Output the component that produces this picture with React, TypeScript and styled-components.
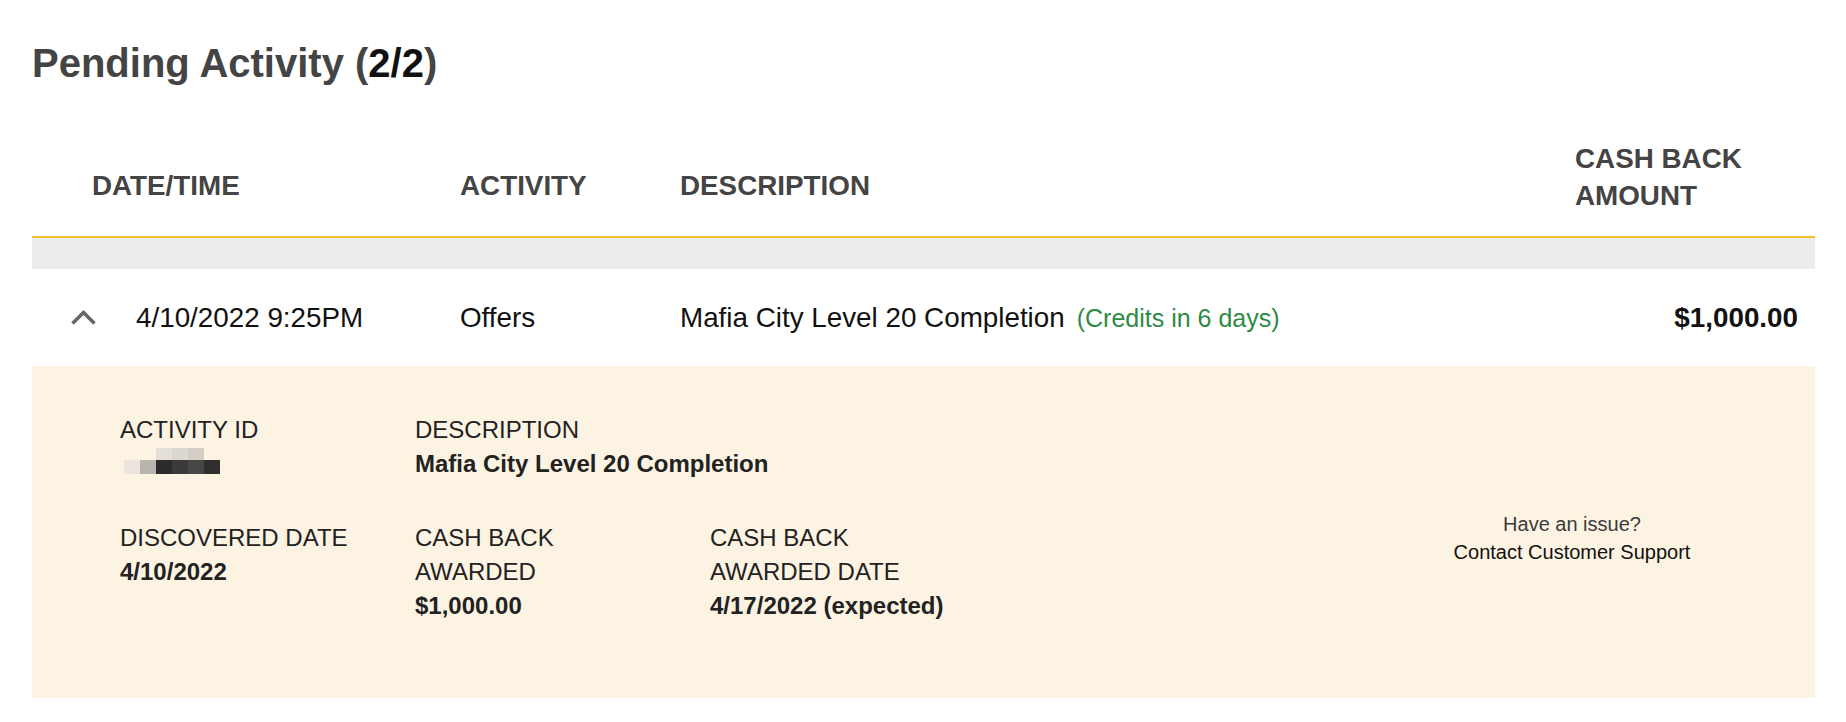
import React from "react";
import styled, { createGlobalStyle } from "styled-components";

const GlobalStyle = createGlobalStyle`
  html, body {
    margin: 0;
    padding: 0;
    background: #ffffff;
  }
  body {
    font-family: "Liberation Sans", Arial, Helvetica, sans-serif;
    -webkit-font-smoothing: antialiased;
  }
`;

const COLS = "428px 220px 1fr 240px";

const Page = styled.main`
  padding: 40px 31px 24px 32px;
`;

const Title = styled.h1`
  margin: 0;
  font-size: 40px;
  line-height: 46px;
  font-weight: 700;
  color: #444444;
`;

const Count = styled.span`
  color: #111111;
`;

const HeaderRow = styled.div`
  display: grid;
  grid-template-columns: ${COLS};
  align-items: end;
  padding: 54px 0 22px;
  border-bottom: 2px solid #f2c12e;
`;

const HeaderCell = styled.div<{ $indent?: number; $stacked?: boolean }>`
  font-size: 27.8px;
  line-height: 37px;
  font-weight: 700;
  color: #444444;
  text-transform: uppercase;
  padding-left: ${(p) => p.$indent ?? 0}px;
  padding-bottom: ${(p) => (p.$stacked ? 0 : 10)}px;
`;

const Band = styled.div`
  height: 31px;
  background: #ececec;
`;

const Row = styled.div`
  display: grid;
  grid-template-columns: ${COLS};
  align-items: center;
  height: 97px;
  font-size: 27.8px;
  color: #111111;
`;

const DateCell = styled.div`
  display: flex;
  align-items: center;
  gap: 39px;
  padding-left: 38px;
`;

const Toggle = styled.button`
  display: flex;
  align-items: center;
  justify-content: center;
  width: 27px;
  height: 17px;
  padding: 0;
  margin: 0;
  border: 0;
  background: none;
  cursor: pointer;
`;

const Cell = styled.div``;

const Credits = styled.span`
  margin-left: 12px;
  font-size: 25px;
  color: #2e8b46;
`;

const Amount = styled.div`
  text-align: right;
  padding-right: 17px;
  font-weight: 700;
`;

const Detail = styled.section`
  display: grid;
  grid-template-columns: 250px 250px 250px 1fr;
  column-gap: 45px;
  row-gap: 40.5px;
  padding: 47px 33px 76px 88px;
  background: #fdf3e3;
  font-size: 24px;
  line-height: 33.75px;
  color: #222222;
`;

const Field = styled.div<{ $span?: number }>`
  grid-column: span ${(p) => p.$span ?? 1};
`;

const Label = styled.div`
  text-transform: uppercase;
`;

const Value = styled.div`
  font-weight: 700;
`;

const Redacted = styled.div`
  display: grid;
  grid-template-columns: repeat(6, 16px);
  grid-template-rows: 12px 14px;
  width: max-content;
  margin: 1px 0 0 4px;
  filter: blur(0.6px);
`;

const Pixel = styled.span<{ $c: string }>`
  background: ${(p) => p.$c};
`;

const Support = styled.div`
  grid-column: 4;
  justify-self: end;
  width: 420px;
  margin-top: -10px;
  text-align: center;
  font-size: 20px;
  line-height: 27.5px;
`;

const Ask = styled.div`
  color: #3a3a3a;
`;

const SupportLink = styled.a`
  color: #111111;
  text-decoration: none;
`;

const pixels = [
  "transparent", "transparent", "#e4dfd7", "#dcd7cf", "#d3cec6", "transparent",
  "#ebe5dc", "#b9b4ad", "#2b2b2b", "#3b3a39", "#474645", "#2f2f2f",
];

const Chevron = () => (
  <svg width="27" height="17" viewBox="0 0 27 17" aria-hidden="true">
    <polyline
      points="2.5,14.5 13.5,3.5 24.5,14.5"
      fill="none"
      stroke="#666666"
      strokeWidth="3.5"
      strokeLinejoin="miter"
    />
  </svg>
);

export default function App() {
  return (
    <>
      <GlobalStyle />
      <Page>
        <Title>
          Pending Activity (<Count>2/2</Count>)
        </Title>

        <HeaderRow>
          <HeaderCell $indent={60}>Date/Time</HeaderCell>
          <HeaderCell>Activity</HeaderCell>
          <HeaderCell>Description</HeaderCell>
          <HeaderCell $stacked>Cash Back Amount</HeaderCell>
        </HeaderRow>

        <Band />

        <Row>
          <DateCell>
            <Toggle aria-label="Collapse">
              <Chevron />
            </Toggle>
            <span>4/10/2022 9:25PM</span>
          </DateCell>
          <Cell>Offers</Cell>
          <Cell>
            Mafia City Level 20 Completion<Credits>(Credits in 6 days)</Credits>
          </Cell>
          <Amount>$1,000.00</Amount>
        </Row>

        <Detail>
          <Field>
            <Label>Activity ID</Label>
            <Redacted aria-label="hidden id">
              {pixels.map((c, i) => (
                <Pixel key={i} $c={c} />
              ))}
            </Redacted>
          </Field>
          <Field $span={2}>
            <Label>Description</Label>
            <Value>Mafia City Level 20 Completion</Value>
          </Field>
          <Field />
          <Field>
            <Label>Discovered Date</Label>
            <Value>4/10/2022</Value>
          </Field>
          <Field>
            <Label>Cash Back Awarded</Label>
            <Value>$1,000.00</Value>
          </Field>
          <Field>
            <Label>Cash Back Awarded Date</Label>
            <Value>4/17/2022 (expected)</Value>
          </Field>
          <Support>
            <Ask>Have an issue?</Ask>
            <SupportLink href="#">Contact Customer Support</SupportLink>
          </Support>
        </Detail>
      </Page>
    </>
  );
}
